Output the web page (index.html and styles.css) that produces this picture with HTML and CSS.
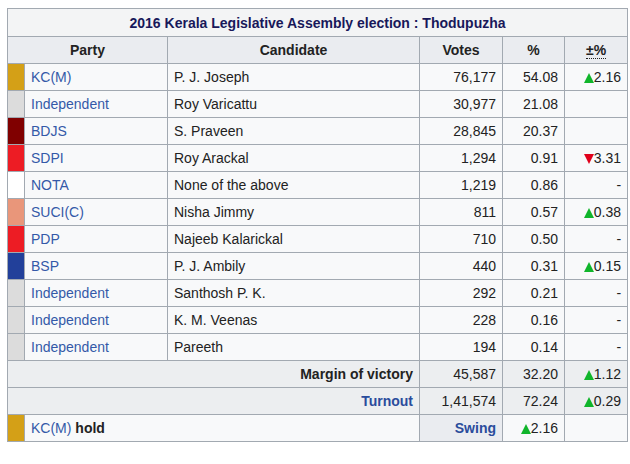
FILE: index.html
```html
<!DOCTYPE html>
<html>
<head>
<meta charset="utf-8">
<link rel="stylesheet" href="styles.css">
</head>
<body>
<table class="wikitable">
  <colgroup>
    <col class="c-sw"><col class="c-party"><col class="c-cand"><col class="c-votes"><col class="c-pct"><col class="c-chg">
  </colgroup>
  <tr class="title-row"><th colspan="6">2016 Kerala Legislative Assembly election : Thodupuzha</th></tr>
  <tr class="head-row">
    <th colspan="2">Party</th><th>Candidate</th><th>Votes</th><th>%</th><th><abbr class="abbr">±%</abbr></th>
  </tr>
  <tr><td class="sw kcm"></td><td><a>KC(M)</a></td><td>P. J. Joseph</td><td class="num">76,177</td><td class="num">54.08</td><td class="num"><span class="up"></span>2.16</td></tr>
  <tr><td class="sw ind"></td><td><a>Independent</a></td><td>Roy Varicattu</td><td class="num">30,977</td><td class="num">21.08</td><td class="num"></td></tr>
  <tr><td class="sw bdjs"></td><td><a>BDJS</a></td><td>S. Praveen</td><td class="num">28,845</td><td class="num">20.37</td><td class="num"></td></tr>
  <tr><td class="sw sdpi"></td><td><a>SDPI</a></td><td>Roy Arackal</td><td class="num">1,294</td><td class="num">0.91</td><td class="num"><span class="down"></span>3.31</td></tr>
  <tr><td class="sw nota"></td><td><a>NOTA</a></td><td>None of the above</td><td class="num">1,219</td><td class="num">0.86</td><td class="num">-</td></tr>
  <tr><td class="sw suci"></td><td><a>SUCI(C)</a></td><td>Nisha Jimmy</td><td class="num">811</td><td class="num">0.57</td><td class="num"><span class="up"></span>0.38</td></tr>
  <tr><td class="sw pdp"></td><td><a>PDP</a></td><td>Najeeb Kalarickal</td><td class="num">710</td><td class="num">0.50</td><td class="num">-</td></tr>
  <tr><td class="sw bsp"></td><td><a>BSP</a></td><td>P. J. Ambily</td><td class="num">440</td><td class="num">0.31</td><td class="num"><span class="up"></span>0.15</td></tr>
  <tr><td class="sw ind"></td><td><a>Independent</a></td><td>Santhosh P. K.</td><td class="num">292</td><td class="num">0.21</td><td class="num">-</td></tr>
  <tr><td class="sw ind"></td><td><a>Independent</a></td><td>K. M. Veenas</td><td class="num">228</td><td class="num">0.16</td><td class="num">-</td></tr>
  <tr><td class="sw ind"></td><td><a>Independent</a></td><td>Pareeth</td><td class="num">194</td><td class="num">0.14</td><td class="num">-</td></tr>
  <tr class="grey-row"><td colspan="3" class="num"><b>Margin of victory</b></td><td class="num">45,587</td><td class="num">32.20</td><td class="num"><span class="up"></span>1.12</td></tr>
  <tr class="grey-row"><td colspan="3" class="num"><b><a>Turnout</a></b></td><td class="num">1,41,574</td><td class="num">72.24</td><td class="num"><span class="up"></span>0.29</td></tr>
  <tr><td class="sw kcm"></td><td colspan="2"><a>KC(M)</a> <b>hold</b></td><td class="num swing"><b><a>Swing</a></b></td><td class="num"><span class="up"></span>2.16</td><td></td></tr>
</table>
</body>
</html>
```
FILE: styles.css
```css
html, body {
  margin: 0;
  padding: 0;
  background: #ffffff;
}
body {
  padding: 8px 0 0 7px;
  font-family: "Liberation Sans", Arial, sans-serif;
  font-size: 14px;
  color: #222222;
}
.wikitable {
  border-collapse: collapse;
  table-layout: fixed;
  width: 621px;
  background: #f8f9fa;
  border: 1px solid #a2a9b1;
}
.c-sw { width: 17px; }
.c-party { width: 143px; }
.c-cand { width: 252px; }
.c-votes { width: 83px; }
.c-pct { width: 62px; }
.c-chg { width: 63px; }
.wikitable th, .wikitable td {
  border: 1px solid #a2a9b1;
  padding: 0 6px;
  height: 26px;
  line-height: 18px;
  vertical-align: middle;
  text-align: left;
  white-space: nowrap;
}
.wikitable th {
  font-weight: bold;
  text-align: center;
  background: #eaecf0;
}
.title-row th {
  background: #f3f4f5;
  color: #18185a;
  height: 27px;
}
.abbr {
  text-decoration: none;
  border-bottom: 1px dotted #222222;
}
.wikitable td.num { text-align: right; }
.wikitable a { color: #3459a8; }
.wikitable b a { color: #2a4c9c; }
.wikitable td.sw { padding: 0; }
.kcm { background: #d4a017; }
.ind { background: #dcdcdc; }
.bdjs { background: #800000; }
.sdpi { background: #ed1c24; }
.nota { background: #ffffff; }
.suci { background: #e9967a; }
.pdp { background: #ed1c24; }
.bsp { background: #22409a; }
.grey-row td { background: #eceef0; }
.wikitable td.swing { background: #eaecf0; }
.up, .down {
  display: inline-block;
  width: 0;
  height: 0;
  border-left: 5px solid transparent;
  border-right: 5px solid transparent;
  vertical-align: -1px;
}
.up { border-bottom: 10px solid #10b52b; }
.down { border-top: 10px solid #e0001a; }
```
